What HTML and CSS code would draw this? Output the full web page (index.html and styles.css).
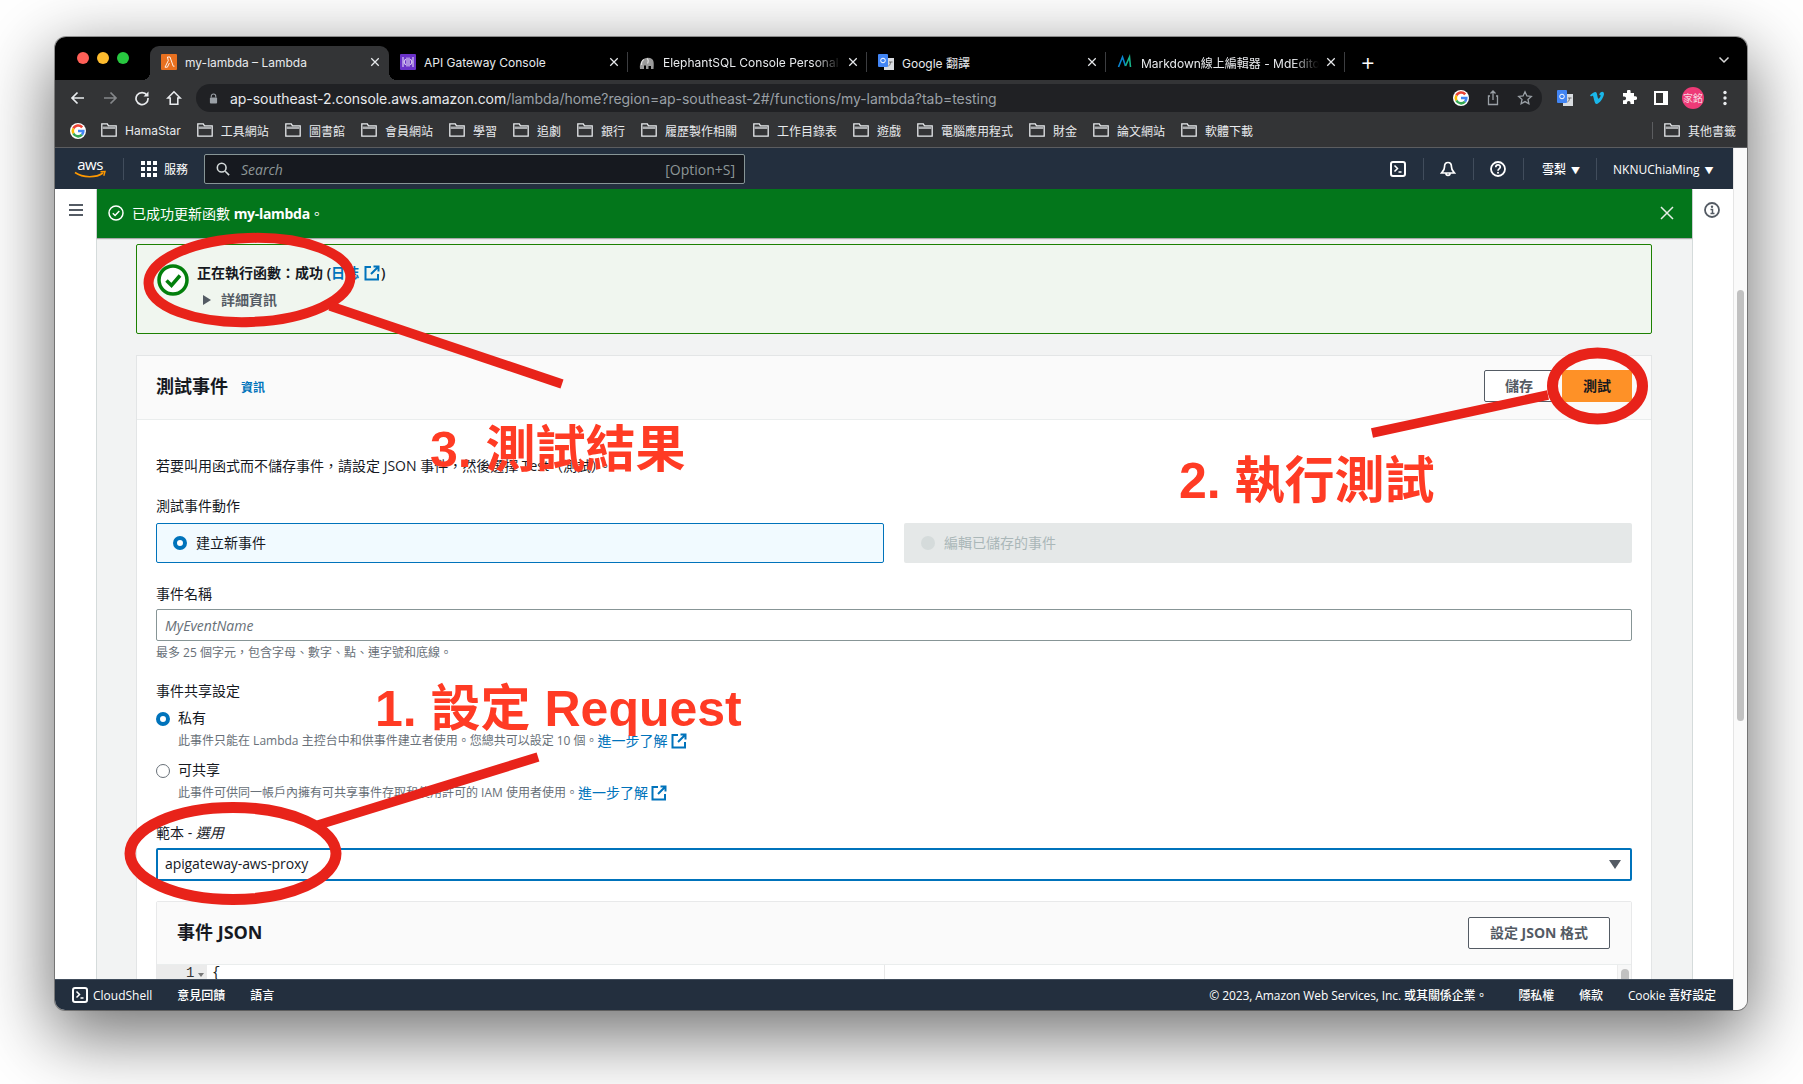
FILE: index.html
```html
<!DOCTYPE html>
<html lang="zh-Hant">
<head>
<meta charset="utf-8">
<title>my-lambda – Lambda</title>
<link rel="stylesheet" href="styles.css">
</head>
<body>
<div class="window">
  <div class="tabstrip">
    <div class="lights"><i class="light red"></i><i class="light yellow"></i><i class="light green"></i></div>
    <div class="tab active">
      <svg class="favicon" viewBox="0 0 16 16"><rect width="16" height="16" rx="1" fill="#e8701f"/><path d="M4 13.2 7.3 6.6 6.4 3H9l3.2 9.2h1.3M4 13.2h2.4l2-4.2" fill="none" stroke="#fff" stroke-width=".9"/></svg>
      <span class="tab-title">my-lambda – Lambda</span><svg class="tab-x" viewBox="0 0 12 12"><use href="#x-mark"/></svg>
    </div>
    <div class="tab sep">
      <svg class="favicon" viewBox="0 0 16 16"><rect width="16" height="16" rx="1" fill="#6b32c9"/><path d="M3 3v10M13 3v10M5.500 5 4 8l1.500 3M10.500 5 12 8l-1.500 3M7 3.500v9M9 3.500v9" fill="none" stroke="#fff" stroke-width=".9"/></svg>
      <span class="tab-title">API Gateway Console</span><svg class="tab-x" viewBox="0 0 12 12"><use href="#x-mark"/></svg>
    </div>
    <div class="tab sep">
      <svg class="favicon" viewBox="0 0 16 16"><path d="M1 15c-.5-3 0-6.500 2-8 2-3.500 7-4 10-2 2 1.500 2 5 1.500 10H12v-3H9.500v3H7v-3.500H5V15z" fill="#9a9a9a"/><path d="M5 5.500c-2 1-2.800 3-2.300 5.500M8 4.500c1.500 1 1.500 3.500.5 5" fill="none" stroke="#e4e4e4" stroke-width="1.100"/></svg>
      <span class="tab-title fade">ElephantSQL Console Personal</span><svg class="tab-x" viewBox="0 0 12 12"><use href="#x-mark"/></svg>
    </div>
    <div class="tab sep">
      <svg class="favicon" viewBox="0 0 16 16"><rect x="6" y="4" width="10" height="12" fill="#d9dce0"/><rect width="10" height="13" rx="1" fill="#4285f4"/><circle cx="5" cy="6.500" r="2.300" fill="none" stroke="#fff" stroke-width="1"/><path d="M11 8h3.500M12.500 8c0 2-1 3.500-2 4" stroke="#6a6a6a" fill="none"/></svg>
      <span class="tab-title">Google 翻譯</span><svg class="tab-x" viewBox="0 0 12 12"><use href="#x-mark"/></svg>
    </div>
    <div class="tab sep">
      <svg class="favicon" viewBox="0 0 16 16"><path d="M1.500 13 5.500 3l3 9" fill="none" stroke="#0a84d0" stroke-width="1.600"/><path d="M8.500 12l4-9 1 10" fill="none" stroke="#17b38a" stroke-width="1.600"/></svg>
      <span class="tab-title fade">Markdown線上編輯器 - MdEditor</span><svg class="tab-x" viewBox="0 0 12 12"><use href="#x-mark"/></svg>
    </div>
    <span class="newtab">+</span>
    <svg class="chev" viewBox="0 0 12 8"><path d="M1.500 1.500 6 6l4.500-4.500" fill="none" stroke="#d8d8d8" stroke-width="1.500"/></svg>
  </div>

  <div class="toolbar">
    <svg class="tool" viewBox="0 0 16 16"><path d="M14 8H2.500M7.500 2.500 2 8l5.500 5.500" fill="none" stroke="#e8eaed" stroke-width="1.700"/></svg>
    <svg class="tool" viewBox="0 0 16 16"><path d="M2 8h11.500M8.500 2.500 14 8l-5.500 5.500" fill="none" stroke="#85878a" stroke-width="1.700"/></svg>
    <svg class="tool" viewBox="0 0 16 16"><path d="M13 5.200A6 6 0 1 0 14 8" fill="none" stroke="#e8eaed" stroke-width="1.700"/><path d="M14.500 1.500v5h-5z" fill="#e8eaed"/></svg>
    <svg class="tool" viewBox="0 0 16 16"><path d="M8 1.800 1.800 8h2.400v6.200h7.600V8h2.400z" fill="none" stroke="#e8eaed" stroke-width="1.600"/></svg>
    <div class="omnibox">
      <svg class="lock" viewBox="0 0 10 12"><path d="M2.500 5V3.500a2.500 2.500 0 0 1 5 0V5" fill="none" stroke="#9aa0a6" stroke-width="1.200"/><rect x="1" y="5" width="8" height="6.500" rx="1" fill="#9aa0a6"/></svg>
      <span class="url"><b class="host">ap-southeast-2.console.aws.amazon.com</b>/lambda/home?region=ap-southeast-2#/functions/my-lambda?tab=testing</span>
      <svg class="omni-ic" viewBox="0 0 16 16"><circle cx="8" cy="8" r="8" fill="#fff"/><use href="#g-mark"/></svg>
      <svg class="omni-ic" viewBox="0 0 16 16"><path d="M8 1v9M5.500 3.500 8 1l2.500 2.500M5 6H3.500v8.500h9V6H11" fill="none" stroke="#9aa0a6" stroke-width="1.300"/></svg>
      <svg class="omni-ic" viewBox="0 0 16 16"><path d="m8 1.800 1.900 4.100 4.400.5-3.300 3 .9 4.400L8 11.600l-3.900 2.200.9-4.400-3.300-3 4.400-.5z" fill="none" stroke="#9aa0a6" stroke-width="1.300"/></svg>
    </div>
    <div class="extensions">
      <svg class="ext" viewBox="0 0 16 16"><rect x="6" y="4" width="10" height="12" fill="#d9dce0"/><rect width="10" height="13" rx="1" fill="#4285f4"/><circle cx="5" cy="6.500" r="2.300" fill="none" stroke="#fff"/><path d="M11 8h3.500M12.500 8c0 2-1 3.500-2 4" stroke="#6a6a6a" fill="none"/></svg>
      <svg class="ext" viewBox="0 0 16 16"><path d="M1 5.200 2 6.500c1-.7 1.600-1 2-.5.800 1 1.400 8 3.500 8 2.800 0 7.500-7 7.500-10C15 1 11.500 1 10 4.800c1.800-.5 2 .7 1 2.500-1.300 2.200-2 1.500-2.500-.8C8 3.700 7.800 1.800 6 2 4.500 2.200 2.500 4 1 5.200z" fill="#1ab7ea"/></svg>
      <svg class="ext" viewBox="0 0 16 16"><path d="M6 1.500a1.800 1.800 0 0 1 3.600 0V3H13v3.300h1.200a1.900 1.900 0 0 1 0 3.800H13V14H9.500v-1.200a1.800 1.800 0 0 0-3.600 0V14H2v-3.800h1.200a1.900 1.900 0 0 0 0-3.800H2V3h4z" fill="#fff"/></svg>
      <svg class="ext" viewBox="0 0 16 16"><rect x="1" y="1" width="14" height="14" fill="#fff"/><rect x="3" y="3" width="7" height="10" fill="#333"/></svg>
      <span class="avatar">家銘</span>
      <svg class="ext" viewBox="0 0 16 16"><circle cx="8" cy="2.500" r="1.700" fill="#e8eaed"/><circle cx="8" cy="8" r="1.700" fill="#e8eaed"/><circle cx="8" cy="13.500" r="1.700" fill="#e8eaed"/></svg>
    </div>
  </div>

  <div class="bookmarks">
    <svg class="bm-g" viewBox="0 0 16 16"><circle cx="8" cy="8" r="8" fill="#fff"/><use href="#g-mark"/></svg>
    <span class="bm"><svg class="folder" viewBox="0 0 16 14"><use href="#folder-mark"/></svg>HamaStar</span>
    <span class="bm"><svg class="folder" viewBox="0 0 16 14"><use href="#folder-mark"/></svg>工具網站</span>
    <span class="bm"><svg class="folder" viewBox="0 0 16 14"><use href="#folder-mark"/></svg>圖書館</span>
    <span class="bm"><svg class="folder" viewBox="0 0 16 14"><use href="#folder-mark"/></svg>會員網站</span>
    <span class="bm"><svg class="folder" viewBox="0 0 16 14"><use href="#folder-mark"/></svg>學習</span>
    <span class="bm"><svg class="folder" viewBox="0 0 16 14"><use href="#folder-mark"/></svg>追劇</span>
    <span class="bm"><svg class="folder" viewBox="0 0 16 14"><use href="#folder-mark"/></svg>銀行</span>
    <span class="bm"><svg class="folder" viewBox="0 0 16 14"><use href="#folder-mark"/></svg>履歷製作相關</span>
    <span class="bm"><svg class="folder" viewBox="0 0 16 14"><use href="#folder-mark"/></svg>工作目錄表</span>
    <span class="bm"><svg class="folder" viewBox="0 0 16 14"><use href="#folder-mark"/></svg>遊戲</span>
    <span class="bm"><svg class="folder" viewBox="0 0 16 14"><use href="#folder-mark"/></svg>電腦應用程式</span>
    <span class="bm"><svg class="folder" viewBox="0 0 16 14"><use href="#folder-mark"/></svg>財金</span>
    <span class="bm"><svg class="folder" viewBox="0 0 16 14"><use href="#folder-mark"/></svg>論文網站</span>
    <span class="bm"><svg class="folder" viewBox="0 0 16 14"><use href="#folder-mark"/></svg>軟體下載</span>
    <span class="bm other"><svg class="folder" viewBox="0 0 16 14"><use href="#folder-mark"/></svg>其他書籤</span>
  </div>

  <div class="viewport">
    <div class="console">
      <nav class="awsnav">
        <svg class="awslogo" viewBox="0 0 32 22"><text x="16" y="12" text-anchor="middle" class="awslogo-text">aws</text><path d="M1 14.500c8 5.500 21 5.500 28 .5" fill="none" stroke="#f90" stroke-width="1.600"/><path d="M26.500 13.800 31 13.500l-1.200 4.300" fill="none" stroke="#f90" stroke-width="1.400"/></svg>
        <i class="navsep"></i>
        <svg class="grid" viewBox="0 0 16 16"><g fill="#fff"><rect width="4" height="4"/><rect x="6" width="4" height="4"/><rect x="12" width="4" height="4"/><rect y="6" width="4" height="4"/><rect x="6" y="6" width="4" height="4"/><rect x="12" y="6" width="4" height="4"/><rect y="12" width="4" height="4"/><rect x="6" y="12" width="4" height="4"/><rect x="12" y="12" width="4" height="4"/></g></svg>
        <span class="services">服務</span>
        <div class="search">
          <svg class="search-ic" viewBox="0 0 16 16"><circle cx="6.500" cy="6.500" r="5" fill="none" stroke="#d5dbdb" stroke-width="1.800"/><path d="m10.500 10.500 4.500 4.500" stroke="#d5dbdb" stroke-width="1.800"/></svg>
          <em class="search-ph">Search</em>
          <span class="search-key">[Option+S]</span>
        </div>
        <div class="nav-right">
          <svg class="nav-ic" viewBox="0 0 16 16"><rect x="1" y="1" width="14" height="14" rx="2" fill="none" stroke="#fff" stroke-width="2"/><path d="m4.500 4.500 3 3-3 3M8.500 11h3" fill="none" stroke="#fff" stroke-width="1.500"/></svg>
          <i class="navsep s1"></i>
          <svg class="nav-ic" viewBox="0 0 16 16"><path d="M8 1.500c-2.500 0-3.500 2-3.500 4.500 0 3-1.500 4-3 6h13c-1.500-2-3-3-3-6 0-2.500-1-4.500-3.500-4.500zM6 12.500c0 2.500 4 2.500 4 0" fill="none" stroke="#fff" stroke-width="1.700"/></svg>
          <i class="navsep s1"></i>
          <svg class="nav-ic" viewBox="0 0 16 16"><circle cx="8" cy="8" r="7" fill="none" stroke="#fff" stroke-width="1.800"/><path d="M5.800 6.200c0-3 4.500-3 4.500-.2 0 2-2.300 1.800-2.300 3.700" fill="none" stroke="#fff" stroke-width="1.700"/><circle cx="8" cy="11.800" r="1" fill="#fff"/></svg>
          <i class="navsep s2"></i>
          <span class="nav-menu region">雪梨<small class="tri">▼</small></span>
          <i class="navsep s3"></i>
          <span class="nav-menu user">NKNUChiaMing<small class="tri">▼</small></span>
        </div>
      </nav>

      <div class="main">
        <aside class="rail left">
          <svg class="ham" viewBox="0 0 14 12"><path d="M0 1h14M0 6h14M0 11h14" stroke="#545b64" stroke-width="2"/></svg>
        </aside>
        <section class="content">
          <div class="flash">
            <svg class="flash-ic" viewBox="0 0 16 16"><circle cx="8" cy="8" r="7" fill="none" stroke="#fff" stroke-width="1.500"/><path d="m4.800 8.200 2.300 2.300 4.200-4.500" fill="none" stroke="#fff" stroke-width="1.500"/></svg>
            <span class="flash-text">已成功更新函數 <b>my-lambda</b>。</span>
            <svg class="flash-x" viewBox="0 0 14 14"><path d="m1 1 12 12M13 1 1 13" stroke="#e6efe7" stroke-width="1.500"/></svg>
          </div>
          <div class="content-inner">
            <div class="result">
              <svg class="result-ic" viewBox="0 0 32 32"><circle cx="16" cy="16" r="14" fill="#fff" stroke="#037f0c" stroke-width="3.500"/><path d="m9.500 16.500 5 5 8.500-10" fill="none" stroke="#037f0c" stroke-width="3.500"/></svg>
              <div class="result-body">
                <div class="result-title">正在執行函數：成功 (<span class="link">日誌</span><svg class="ext-link" viewBox="0 0 16 16"><use href="#ext-mark"/></svg>)</div>
                <div class="result-more"><i class="tri-right"></i>詳細資訊</div>
              </div>
            </div>

            <div class="panel">
              <header class="panel-head">
                <h2 class="panel-title">測試事件</h2>
                <span class="info-link">資訊</span>
                <div class="actions">
                  <span class="btn">儲存</span>
                  <span class="btn primary">測試</span>
                </div>
              </header>
              <div class="panel-body">
                <p class="lead">若要叫用函式而不儲存事件，請設定 JSON 事件，然後選擇 Test（測試）。</p>
                <div class="label gap-21">測試事件動作</div>
                <div class="cards">
                  <div class="card selected"><i class="radio on"></i>建立新事件</div>
                  <div class="card disabled"><i class="radio off"></i>編輯已儲存的事件</div>
                </div>
                <div class="label gap-22">事件名稱</div>
                <div class="input placeholder">MyEventName</div>
                <div class="hint">最多 25 個字元，包含字母、數字、點、連字號和底線。</div>
                <div class="label gap-21">事件共享設定</div>
                <div class="option first-opt"><i class="radio on"></i>私有</div>
                <div class="desc">此事件只能在 Lambda 主控台中和供事件建立者使用。您總共可以設定 10 個。<span class="link">進一步了解</span><svg class="ext-link" viewBox="0 0 16 16"><use href="#ext-mark"/></svg></div>
                <div class="option"><i class="radio blank"></i>可共享</div>
                <div class="desc">此事件可供同一帳戶內擁有可共享事件存取和使用許可的 IAM 使用者使用。<span class="link">進一步了解</span><svg class="ext-link" viewBox="0 0 16 16"><use href="#ext-mark"/></svg></div>
                <div class="label gap-23">範本 - <em>選用</em></div>
                <div class="select">apigateway-aws-proxy<i class="caret"></i></div>
                <div class="json">
                  <header class="json-head">
                    <h3 class="json-title">事件 JSON</h3>
                    <span class="btn wide">設定 JSON 格式</span>
                  </header>
                  <div class="editor">
                    <div class="gutter"><span>1</span><i class="fold"></i></div>
                    <code class="code">{</code>
                    <i class="print-margin"></i>
                    <div class="ed-scroll"><i></i></div>
                  </div>
                </div>
              </div>
            </div>
          </div>
        </section>
        <aside class="rail right">
          <svg class="info" viewBox="0 0 16 16"><circle cx="8" cy="8" r="7" fill="none" stroke="#545b64" stroke-width="1.800"/><circle cx="8" cy="4.800" r="1.200" fill="#545b64"/><path d="M6.500 7.500H8.500v4M6.500 11.500h4" fill="none" stroke="#545b64" stroke-width="1.500"/></svg>
        </aside>
      </div>

      <footer class="footer">
        <svg class="foot-ic" viewBox="0 0 16 16"><rect x="1" y="1" width="14" height="14" rx="2" fill="none" stroke="#fff" stroke-width="2"/><path d="m4.500 4.500 3 3-3 3M8.500 11h3" fill="none" stroke="#fff" stroke-width="1.500"/></svg>
        <span class="foot-shell">CloudShell</span>
        <span class="foot-a">意見回饋</span>
        <span class="foot-a">語言</span>
        <span class="foot-copy">© 2023, Amazon Web Services, Inc. 或其關係企業。</span>
        <span class="foot-b foot-first">隱私權</span>
        <span class="foot-b">條款</span>
        <span class="foot-b">Cookie 喜好設定</span>
      </footer>
    </div>
    <div class="pagebar"><i class="thumb"></i></div>
  </div>

  <svg class="defs" width="0" height="0">
    <defs>
      <g id="g-mark" fill="none" stroke-width="2.600">
        <path d="M12.200 4.400A5.300 5.300 0 0 0 3.400 5.500" stroke="#ea4335"/>
        <path d="M3.400 5.500a5.300 5.300 0 0 0 0 5" stroke="#fbbc05"/>
        <path d="M3.400 10.500a5.300 5.300 0 0 0 8.600 1.100" stroke="#34a853"/>
        <path d="M12 11.600A5.300 5.300 0 0 0 13.300 8H8" stroke="#4285f4"/>
      </g>
      <g id="ext-mark" fill="none" stroke="#0073bb" stroke-width="2">
        <path d="M7 2H1.500v12.500H14V9M9.500 1.500H14.500V6.500M14 2 7 9"/>
      </g>
      <g id="x-mark">
        <path d="m1.500 1.500 9 9M10.500 1.500l-9 9" fill="none" stroke="#e8eaed" stroke-width="1.500"/>
      </g>
      <g id="folder-mark">
        <path d="M.8 13.200V.8h5.500l1.200 2h7.700v10.400z" fill="#333436" stroke="#e8eaed" stroke-width="1.300"/>
        <path d="M1.500 3.500h13V6h-13z" fill="#a9abae"/>
      </g>
    </defs>
  </svg>
</div>

<svg class="marks" viewBox="0 0 1803 1084" width="1803" height="1084">
  <g fill="none" stroke="#e8231a">
    <ellipse cx="249.500" cy="280" rx="101" ry="42" stroke-width="10" transform="rotate(-2 249.500 280)"/>
    <path d="M330 306 562 384" stroke-width="9.500"/>
    <ellipse cx="1597.500" cy="386" rx="45" ry="33" stroke-width="11"/>
    <path d="M1548 395 1372 433" stroke-width="9.500"/>
    <ellipse cx="233" cy="853.500" rx="103" ry="46" stroke-width="11"/>
    <path d="M318 825 538 757" stroke-width="9.500"/>
  </g>
</svg>
<span class="note note3">3. 測試結果</span>
<span class="note note2">2. 執行測試</span>
<span class="note note1">1. 設定 Request</span>
</body>
</html>
```

FILE: styles.css
```css
* { box-sizing: border-box; }
html, body { margin: 0; height: 1084px; overflow: hidden; background: #fff; }
body {
  padding: 37px 56px 74px 55px;
  position: relative;
  font-family: "Open Sans", "Noto Sans CJK TC", sans-serif;
  font-size: 14px;
  color: #16191f;
}
i { display: block; font-style: normal; }
svg { display: block; flex: none; }

.window {
  width: 1692px;
  height: 973px;
  display: flex;
  flex-direction: column;
  border-radius: 11px 11px 10px 10px;
  overflow: hidden;
  background: #fff;
  box-shadow: 0 22px 70px 4px rgba(0,0,0,.56), 0 0 0 1px rgba(0,0,0,.35);
  position: relative;
}
.defs { position: absolute; }

/* Tab strip */
.tabstrip {
  height: 43px;
  flex: none;
  background: #000;
  display: flex;
  align-items: flex-end;
  padding-left: 22px;
  font-family: Inter, "Noto Sans CJK TC", sans-serif;
  font-size: 12px;
  color: #e8eaed;
  position: relative;
}
.lights { display: flex; gap: 8px; width: 73px; height: 34px; padding-top: 6px; }
.light { width: 12px; height: 12px; border-radius: 50%; }
.red { background: #ff5f57; }
.yellow { background: #febc2e; }
.green { background: #28c840; }
.tab {
  width: 239px;
  height: 34px;
  display: flex;
  align-items: center;
  padding: 0 11px 2px;
  position: relative;
}
.tab.active { background: #333436; border-radius: 9px 9px 0 0; }
.tab.active::before, .tab.active::after {
  content: "";
  position: absolute;
  bottom: 0;
  width: 8px;
  height: 8px;
}
.tab.active::before { left: -8px; background: radial-gradient(circle at 0 0, transparent 8px, #333436 8px); }
.tab.active::after { right: -8px; background: radial-gradient(circle at 100% 0, transparent 8px, #333436 8px); }
.tab.sep::after {
  content: "";
  position: absolute;
  right: 0;
  top: 6px;
  height: 20px;
  width: 1px;
  background: #3c3d40;
}
.favicon { width: 16px; height: 16px; margin-right: 8px; }
.tab-title { flex: 1; white-space: nowrap; overflow: hidden; }
.tab-title.fade { -webkit-mask-image: linear-gradient(90deg, #000 85%, transparent 100%); mask-image: linear-gradient(90deg, #000 85%, transparent 100%); }
.tab-x { width: 10px; height: 10px; margin-left: 7px; margin-right: -2px; }
.newtab { font-size: 24px; font-weight: 300; line-height: 32px; height: 34px; margin-left: 15px; color: #fff; }
.chev { width: 12px; height: 8px; position: absolute; right: 17px; top: 19px; }

/* Toolbar */
.toolbar {
  height: 37px;
  flex: none;
  background: #333436;
  display: flex;
  align-items: center;
  padding: 0 14px 1px 15px;
}
.tool { width: 16px; height: 16px; margin-right: 16px; }
.omnibox {
  width: 1346px;
  height: 28px;
  margin-left: -2px;
  border-radius: 14px;
  background: #202124;
  display: flex;
  align-items: center;
  padding: 0 9px 0 13px;
  font-family: Inter, sans-serif;
  font-size: 14px;
  color: #9aa0a6;
  letter-spacing: -.045px;
}
.lock { width: 9px; height: 11px; margin-right: 12px; }
.url { flex: 1; white-space: nowrap; }
.host { color: #e8eaed; font-weight: 400; }
.omni-ic { width: 16px; height: 16px; margin-left: 16px; }
.extensions { display: flex; align-items: center; margin-left: 15px; gap: 16px; }
.ext { width: 16px; height: 16px; }
.avatar {
  width: 22px;
  height: 22px;
  margin: 0 -3px;
  border-radius: 50%;
  background: #ee3a77;
  color: #f6d3df;
  font: 10px/22px "Noto Sans CJK TC", sans-serif;
  text-align: center;
}

/* Bookmarks */
.bookmarks {
  height: 31px;
  flex: none;
  background: #333436;
  border-bottom: 1px solid #5c5d60;
  display: flex;
  align-items: center;
  gap: 16px;
  padding: 0 11px 4px 15px;
  font-family: Inter, "Noto Sans CJK TC", sans-serif;
  font-size: 12px;
  color: #e8eaed;
}
.bm-g { width: 16px; height: 16px; margin-right: -1px; margin-top: 2px; }
.bm { display: flex; align-items: center; gap: 8px; white-space: nowrap; }
.folder { width: 16px; height: 14px; }
.bm.other { margin-left: auto; padding-left: 11px; border-left: 1px solid #5c5d60; }

/* Viewport */
.viewport { flex: 1; min-height: 0; display: flex; }
.console { width: 1678px; display: flex; flex-direction: column; }
.pagebar { width: 14px; background: #fafafa; border-left: 1px solid #e5e5e5; padding: 142px 3px 0 3px; }
.thumb { width: 7px; height: 431px; border-radius: 4px; background: #c1c1c1; }

/* AWS nav */
.awsnav {
  height: 41px;
  flex: none;
  background: #232f3e;
  display: flex;
  align-items: center;
  padding: 1px 0 0 19px;
  color: #fff;
  font-size: 12px;
}
.awslogo { width: 32px; height: 22px; margin-right: 17px; }
.awslogo-text { font: 400 15px "Open Sans", sans-serif; fill: #fff; letter-spacing: -.5px; }
.navsep { width: 1px; height: 22px; background: #414d5c; }
.grid { width: 16px; height: 16px; margin-left: 17px; }
.services { margin-left: 7px; }
.search {
  width: 541px;
  height: 30px;
  margin-left: 16px;
  background: #16191f;
  border: 1px solid #879596;
  border-radius: 2px;
  display: flex;
  align-items: center;
  padding: 0 9px 0 11px;
  color: #8d9697;
}
.search-ic { width: 14px; height: 14px; margin-right: 11px; }
.search-ph { flex: 1; font-size: 14px; }
.search-key { font-size: 14px; }
.nav-right { flex: 1; display: flex; align-items: center; padding-left: 645px; }
.nav-ic { width: 16px; height: 16px; }
.s1 { margin: 0 16.500px; }
.s2 { margin-left: 17px; margin-right: 18px; }
.s3 { margin-left: 16px; margin-right: 16px; }
.nav-menu { white-space: nowrap; font-weight: 500; font-size: 12px; }
.tri { font-size: 9px; margin-left: 5px; }

/* Main */
.main { flex: 1; min-height: 0; display: flex; overflow: hidden; }
.rail { width: 41px; flex: none; background: #fff; }
.rail.left { padding: 15px 0 0 14px; }
.rail.right { padding: 13px 0 0 11px; border-left: 1px solid #d5dbdb; }
.ham { width: 14px; height: 12px; }
.info { width: 16px; height: 16px; }
.content { flex: 1; min-width: 0; background: #f2f3f3; border-left: 1px solid #d5dbdb; }
.flash {
  height: 49px;
  background: #03761b;
  color: #fff;
  display: flex;
  align-items: center;
  padding: 0 18px 2px 11px;
  box-shadow: 0 1px 1px rgba(0,0,0,.3);
  position: relative;
}
.flash-ic { width: 16px; height: 16px; margin-right: 8px; margin-top: 1px; }
.flash-text { flex: 1; }
.flash-text b { letter-spacing: -.3px; }
.flash-x { width: 14px; height: 14px; margin-top: 1px; }
.content-inner { padding: 6px 40px 0 39px; }
.result {
  height: 90px;
  background: #f0f6ef;
  border: 1px solid #1d8102;
  border-radius: 2px;
  display: flex;
  padding: 19px 0 0 20px;
}
.result-ic { width: 32px; height: 32px; margin-right: 8px; }
.result-title { font-weight: 600; line-height: 20px; margin-top: -1px; display: flex; align-items: center; white-space: pre; }
.result-more { display: flex; align-items: center; font-weight: 600; color: #545b64; margin-top: 7px; line-height: 20px; padding-left: 6px; }
.tri-right { width: 0; height: 0; border-left: 8px solid #545b64; border-top: 5px solid transparent; border-bottom: 5px solid transparent; margin-right: 10px; }
.link { color: #0073bb; }
.ext-link { width: 16px; height: 16px; margin-left: 3px; }
.result-title .ext-link { margin: 0 1px 0 5px; }

.panel {
  margin-top: 21px;
  background: #fff;
  border: 1px solid #e3e5e6;
  border-bottom: 0;
}
.panel-head {
  height: 64px;
  background: #fafafa;
  border-bottom: 1px solid #eaeded;
  display: flex;
  align-items: center;
  padding: 0 19px 3px 19px;
}
.panel-title { margin: 0; font-size: 18px; font-weight: 700; line-height: 24px; margin-top: -1px; }
.info-link { margin-left: 13px; margin-top: 1px; color: #0073bb; font-size: 12px; font-weight: 700; }
.actions { margin-left: auto; display: flex; gap: 8px; }
.btn {
  display: block;
  width: 70px;
  height: 32px;
  line-height: 29px;
  text-align: center;
  background: #fff;
  border: 1px solid #545b64;
  border-radius: 2px;
  color: #545b64;
  font-weight: 700;
  font-size: 14px;
}
.btn.primary { background: #fe9127; border-color: #fe9127; color: #16191f; }
.btn.wide { width: 142px; }
.panel-body { padding: 36px 19px 0 19px; }
.lead { margin: 0; line-height: 20px; }
.label { line-height: 18px; height: 20px; }
.gap-21 { margin-top: 21px; }
.gap-22 { margin-top: 22px; }
.gap-23 { margin-top: 23px; }
.cards { display: grid; grid-template-columns: 1fr 1fr; column-gap: 20px; margin-top: 6px; }
.card { height: 40px; display: flex; align-items: center; padding: 0 0 2px 16px; border-radius: 2px; }
.card.selected { background: #f1faff; border: 1px solid #0073bb; }
.card.disabled { background: #e5e8e8; color: #aab7b8; padding-left: 17px; }
.card .radio { margin-right: 9px; margin-top: 2px; }
.radio { width: 14px; height: 14px; border-radius: 50%; flex: none; }
.radio.on { background: #fff; border: 4px solid #0073bb; }
.radio.off { background: #d5dbdb; }
.radio.blank { background: #fff; border: 1px solid #687078; }
.input {
  height: 32px;
  margin-top: 4px;
  border: 1px solid #879596;
  border-radius: 2px;
  line-height: 31px;
  padding-left: 8px;
}
.placeholder { color: #687078; font-style: italic; }
.hint { margin-top: 4px; font-size: 12px; line-height: 16px; height: 16px; color: #687078; }
.option { display: flex; align-items: center; margin-top: 11px; line-height: 18px; height: 20px; gap: 8px; }
.option .radio { margin-top: 2px; }
.first-opt { margin-top: 6px; }
.desc { display: flex; align-items: center; margin-top: 5px; padding-left: 22px; font-size: 12px; height: 16px; line-height: 14px; color: #687078; white-space: pre; }
.desc .link { font-size: 14px; }
.select {
  height: 33px;
  margin-top: 4px;
  border: 2px solid #0073bb;
  border-radius: 2px;
  line-height: 28px;
  padding: 0 8px 0 7px;
  position: relative;
  letter-spacing: -.1px;
}
.caret {
  position: absolute;
  right: 9px;
  top: 10px;
  border-top: 9px solid #545b64;
  border-left: 6px solid transparent;
  border-right: 6px solid transparent;
}
.json { margin-top: 20px; border: 1px solid #e8e9ea; border-radius: 2px 2px 0 0; }
.json-head {
  height: 63px;
  background: #fafafa;
  border-bottom: 1px solid #eaeded;
  display: flex;
  align-items: center;
  justify-content: space-between;
  padding: 0 21px 0 20px;
}
.json-title { margin: 0; font-size: 18px; font-weight: 700; line-height: 24px; margin-top: -3px; }
.editor { display: flex; height: 60px; position: relative; }
.gutter { width: 50px; background: #ebebeb; display: flex; padding: 0 0 0 29px; gap: 4px; font: 14px/17px "Liberation Mono", monospace; color: #333; }
.fold { margin-top: 8px; border-top: 4px solid #777; border-left: 3px solid transparent; border-right: 3px solid transparent; width: 0; height: 0; }
.code { font: 14px/17px "Liberation Mono", monospace; margin-left: 5px; color: #222; }
.print-margin { position: absolute; left: 727px; top: 0; bottom: 0; width: 1px; background: #e8e8e8; }
.ed-scroll { position: absolute; right: 0; top: 0; bottom: 0; width: 14px; background: #f7f7f7; border-left: 1px solid #ececec; padding: 4px 3px; }
.ed-scroll i { width: 8px; height: 40px; background: #c1c1c1; border-radius: 4px; }

/* Footer */
.footer {
  height: 31px;
  flex: none;
  background: #232f3e;
  border-top: 1px solid #414d5c;
  display: flex;
  align-items: center;
  padding: 0 17px;
  color: #fff;
  font-size: 12px;
  font-weight: 500;
  white-space: nowrap;
}
.foot-ic { width: 16px; height: 16px; margin-right: 5px; }
.foot-a { margin-left: 25px; }
.foot-copy { margin-left: auto; letter-spacing: -.1px; }
.foot-b { margin-left: 25px; letter-spacing: -.1px; }
.foot-first { margin-left: 31px; }

/* Hand-drawn annotations placed over the screenshot */
.marks { position: absolute; left: 0; top: 0; pointer-events: none; }
.note {
  position: absolute;
  font-family: "Liberation Sans", "Noto Sans CJK TC", sans-serif;
  font-weight: 700;
  font-size: 50px;
  line-height: 56px;
  color: #ff3b24;
  white-space: nowrap;
}
.note3 { left: 430px; top: 422px; }
.note2 { left: 1179px; top: 453px; }
.note1 { left: 375px; top: 681px; }
```
